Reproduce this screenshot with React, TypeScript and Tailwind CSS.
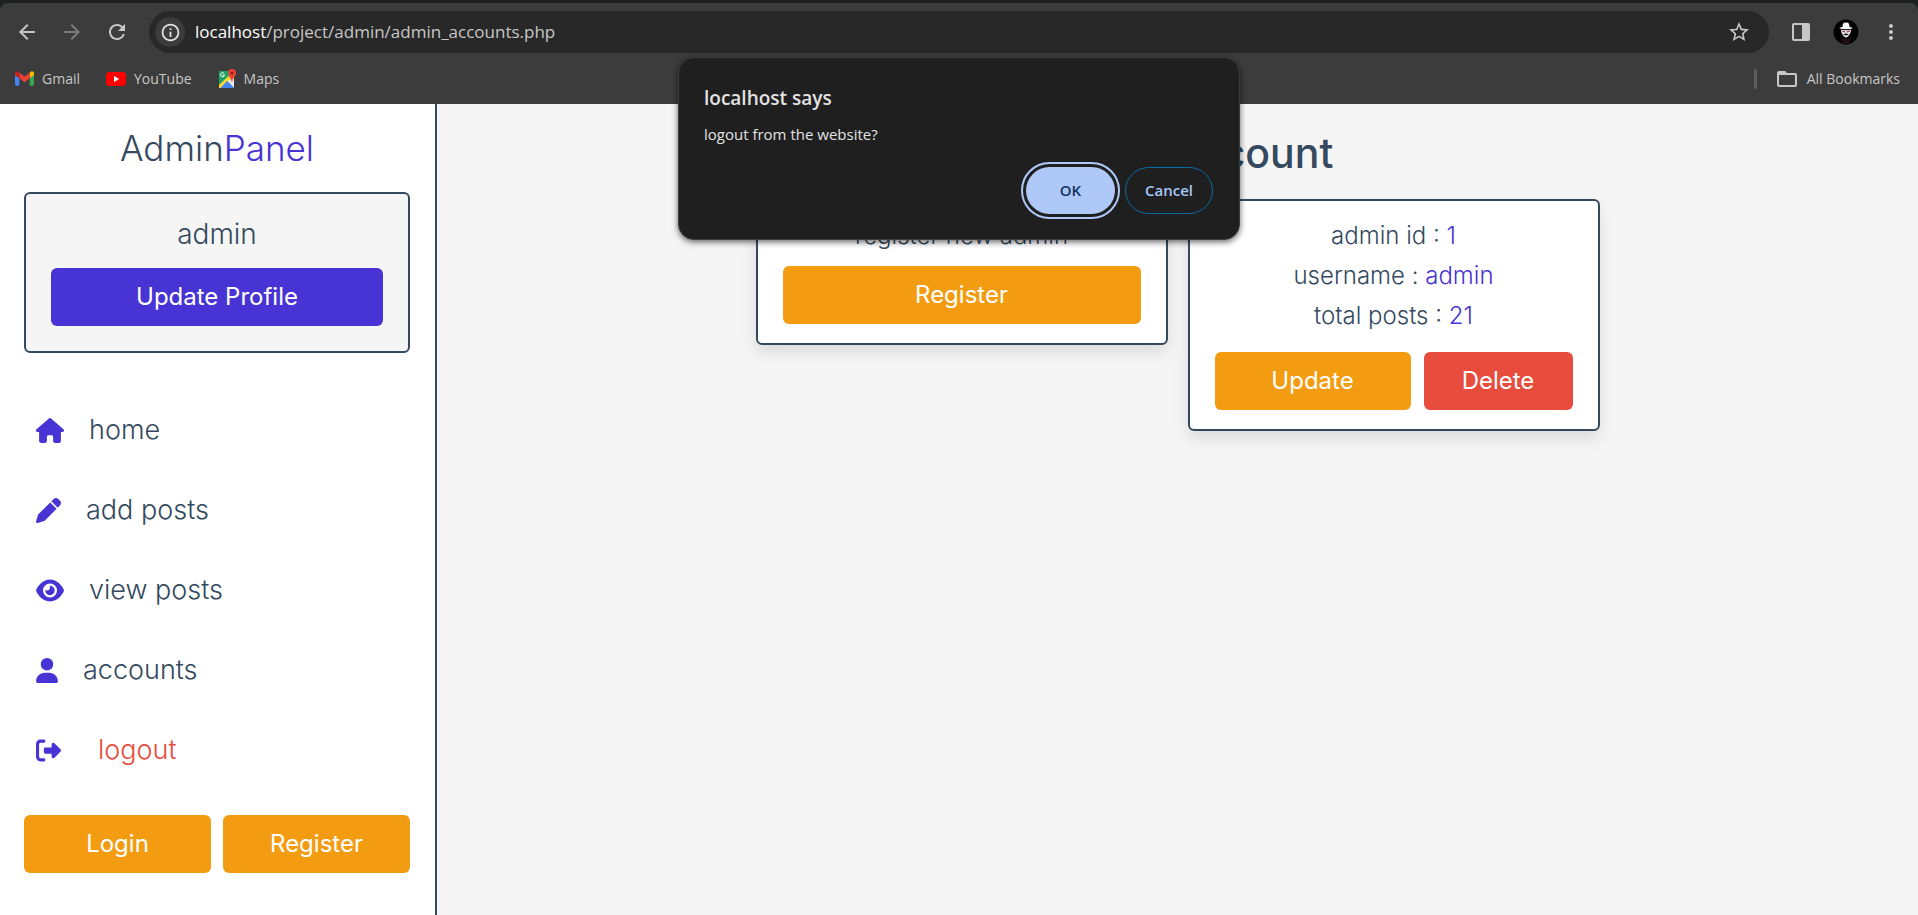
import React from "react";
import { FaHouse, FaPen, FaEye, FaUser, FaRightFromBracket } from "react-icons/fa6";
import { MdArrowBack, MdArrowForward, MdRefresh, MdOutlineInfo, MdStarBorder, MdFolderOpen, MdMoreVert } from "react-icons/md";

const solid = "flex h-[58px] items-center justify-center rounded-md font-['Inter'] text-2xl font-normal text-white";

function GmailIcon() {
  return (
    <svg viewBox="0 0 52 40" className="h-[15px] w-[19px]" aria-hidden="true">
      <path fill="#4285f4" d="M3.500 39.500h8.300V19.400L0 10.500V36a3.500 3.500 0 0 0 3.500 3.500z" />
      <path fill="#34a853" d="M40.200 39.500h8.300A3.500 3.500 0 0 0 52 36V10.500l-11.800 8.900z" />
      <path fill="#fbbc04" d="M40.200 4v15.400L52 10.500V5.800c0-4.400-5-6.900-8.500-4.300z" />
      <path fill="#ea4335" d="M11.800 19.400V4L26 14.700 40.200 4v15.400L26 30z" />
      <path fill="#c5221f" d="M0 5.800v4.700l11.800 8.900V4L8.500 1.500C5-1.100 0 1.400 0 5.800z" />
    </svg>
  );
}

function YouTubeIcon() {
  return (
    <svg viewBox="0 0 20 14" className="h-[14px] w-5" aria-hidden="true">
      <rect width="20" height="14" rx="3.500" fill="#f00" />
      <path d="M8 4l5.200 3L8 10z" fill="#fff" />
    </svg>
  );
}

function MapsIcon() {
  return (
    <svg viewBox="0 0 18 20" className="h-5 w-[18px]" aria-hidden="true">
      <path d="M1 2h15v17H1z" fill="#1fa463" />
      <path d="M16 8v11L9 12z" fill="#e8eaed" />
      <path d="M1 16L10.500 7l2.500 2.500L3.500 19H1z" fill="#fdd835" />
      <path d="M2.500 19L9 12l7 7z" fill="#4285f4" />
      <path d="M6.200 4.600A2 2 0 1 0 6.500 6.200H4.700" fill="none" stroke="#fff" strokeWidth="1" />
      <path d="M14 0A4 4 0 0 0 10 4c0 3 3.300 4.500 4 10 .7-5.500 4-7 4-10a4 4 0 0 0-4-4z" fill="#ea4335" />
      <circle cx="14" cy="4" r="1.500" fill="#8c1f17" />
    </svg>
  );
}

function Avatar() {
  return (
    <svg viewBox="0 0 26 26" className="size-[26px]" aria-hidden="true">
      <circle cx="13" cy="13" r="12.500" fill="#000" />
      <path d="M9.500 8c0-2.800 1-4.500 2.300-4.500.6 0 .8.300 1.200.300s.6-.3 1.200-.3c1.300 0 2.300 1.700 2.300 4.500 1.800.2 3 .6 3 1 0 .7-2.700 1.200-6.500 1.200S6.500 9.700 6.500 9c0-.4 1.200-.8 3-1z" fill="#fff" />
      <path d="M8 10.600c1.500.4 3 .6 5 .6s3.500-.2 5-.6c0 3.900-2 7-5 8.200-3-1.200-5-4.300-5-8.200z" fill="#e5e5e5" />
      <path d="M9.300 12l2.900 1M16.700 12l-2.900 1" stroke="#8a1c1c" fill="none" />
      <path d="M10 15.200l3-.7 3 .7-3 1.300z" fill="#111" />
      <path d="M8.500 21h9M10 23.300h6" stroke="#6b2a2a" strokeWidth=".8" />
    </svg>
  );
}

function BrowserBar() {
  return (
    <header className="bg-[#1f2120] pt-[3px] font-['Open_Sans',sans-serif] text-[#c7c7c7]">
      <div className="rounded-t-lg bg-[#3c3c3c] pt-2">
        <div className="flex h-[42px] items-center">
          <div className="flex w-[149px] items-center gap-[21px] pl-[15px]">
            <button aria-label="Back"><MdArrowBack size={24} /></button>
            <button aria-label="Forward" className="text-[#7c7c7c]"><MdArrowForward size={24} /></button>
            <button aria-label="Reload"><MdRefresh size={24} /></button>
          </div>
          <div className="flex h-full flex-1 items-center rounded-full bg-[#282828] pr-[18px] pl-[6px]">
            <span className="flex size-[30px] items-center justify-center rounded-full bg-[#3c3c3c] text-[#e3e3e3]">
              <MdOutlineInfo size={21} />
            </span>
            <p className="flex-1 pl-[10px] text-[17px]">
              <span className="text-white">localhost</span>/project/admin/admin_accounts.php
            </p>
            <button aria-label="Bookmark this tab"><MdStarBorder size={24} /></button>
          </div>
          <div className="flex w-[149px] items-center justify-between pr-[15px] pl-[20px]">
            <button aria-label="Side panel">
              <svg viewBox="0 0 24 24" className="size-6" aria-hidden="true">
                <path fillRule="evenodd" fill="currentColor" d="M5 3h14a2 2 0 0 1 2 2v14a2 2 0 0 1-2 2H5a2 2 0 0 1-2-2V5a2 2 0 0 1 2-2zm0 2v14h8V5z" />
              </svg>
            </button>
            <Avatar />
            <button aria-label="Menu"><MdMoreVert size={24} /></button>
          </div>
        </div>
        <nav className="flex h-[51px] items-center pr-[18px] pl-[15px] text-sm">
          <a href="#gmail" className="flex items-center gap-2"><GmailIcon />Gmail</a>
          <a href="#youtube" className="ml-[26px] flex items-center gap-2"><YouTubeIcon />YouTube</a>
          <a href="#maps" className="ml-[26px] flex items-center gap-2"><MapsIcon />Maps</a>
          <span className="ml-auto h-5 w-[3px] rounded bg-[#5e5e5e]" />
          <button className="ml-[18px] flex items-center gap-2"><MdFolderOpen size={24} />All Bookmarks</button>
        </nav>
      </div>
    </header>
  );
}

const links = [
  { label: "home", Icon: FaHouse, icon: "h-[25px] w-[28px]", text: "text-[#34495e]" },
  { label: "add posts", Icon: FaPen, icon: "size-[25px]", text: "text-[#34495e]" },
  { label: "view posts", Icon: FaEye, icon: "h-[25px] w-[28px]", text: "text-[#34495e]" },
  { label: "accounts", Icon: FaUser, icon: "h-[25px] w-[22px]", text: "text-[#34495e]" },
  { label: "logout", Icon: FaRightFromBracket, icon: "size-[25px]", text: "pl-3 text-[#e74c3c]" },
];

function Sidebar() {
  return (
    <aside className="w-[437px] shrink-0 border-r-2 border-[#34495e] bg-white pt-6 pr-[25px] pl-6">
      <a href="#dashboard" className="block text-center text-[35px] leading-10">
        Admin<span className="text-[#4834d4]">Panel</span>
      </a>
      <div className="mt-6 rounded-md border-2 border-[#34495e] bg-[#f5f5f5] p-[25px] pt-5">
        <p className="text-center text-[28px] leading-10">admin</p>
        <a href="#profile" className={`${solid} mt-[14px] bg-[#4834d4]`}>Update Profile</a>
      </div>
      <nav className="mt-[37px]">
        {links.map(({ label, Icon, icon, text }) => (
          <a key={label} href={`#${label}`} className="flex h-20 items-center gap-[25px] pl-3 text-[27px]">
            <Icon className={`${icon} text-[#4834d4]`} />
            <span className={text}>{label}</span>
          </a>
        ))}
      </nav>
      <div className="mt-[25px] grid grid-cols-2 gap-3">
        <a href="#login" className={`${solid} bg-[#f39c12]`}>Login</a>
        <a href="#register" className={`${solid} bg-[#f39c12]`}>Register</a>
      </div>
    </aside>
  );
}

const card = "w-[412px] rounded-md border-2 border-[#34495e] bg-white px-[25px] pt-[15px] pb-[19px] text-center text-2xl leading-10 shadow-[0_8px_16px_rgba(0,0,0,0.1)]";

function Accounts() {
  return (
    <main className="flex-1 px-5 pt-6">
      <h1 className="text-center text-[41px] leading-[50px] font-medium">admins account</h1>
      <div className="mt-[21px] flex items-start justify-center gap-5">
        <section className={card}>
          <p>register new admin</p>
          <a href="#register-admin" className={`${solid} mt-[10px] bg-[#f39c12]`}>Register</a>
        </section>
        <section className={card}>
          <p>admin id : <span className="text-[#4834d4]">1</span></p>
          <p>username : <span className="text-[#4834d4]">admin</span></p>
          <p>total posts : <span className="text-[#4834d4]">21</span></p>
          <div className="mt-4 flex gap-[13px]">
            <a href="#update" className={`${solid} flex-1 bg-[#f39c12]`}>Update</a>
            <button className={`${solid} w-[149px] bg-[#e74c3c]`}>Delete</button>
          </div>
        </section>
      </div>
    </main>
  );
}

function LogoutDialog() {
  return (
    <div
      role="alertdialog"
      aria-labelledby="dialog-title"
      className="absolute top-[57px] left-1/2 w-[562px] -translate-x-1/2 rounded-2xl border border-[#3c3c3c] bg-[#1f1f1f] px-[25px] pt-6 pb-[25px] font-['Open_Sans',sans-serif] text-[#e3e3e3] shadow-[0_2px_6px_rgba(0,0,0,0.6)]"
    >
      <h2 id="dialog-title" className="text-[19px] leading-8 font-semibold">localhost says</h2>
      <p className="mt-2 text-[15px] leading-6">logout from the website?</p>
      <div className="mt-[21px] flex justify-end gap-[10px] pr-px text-[15px] font-semibold">
        <button className="h-[47px] w-[89px] rounded-full bg-[#aec9f7] text-[#123163] outline-2 outline-offset-3 outline-[#aec9f7]">OK</button>
        <button className="h-[47px] w-[88px] rounded-full border border-[#0b6ba5] text-[#a8c7fa]">Cancel</button>
      </div>
    </div>
  );
}

export default function App() {
  return (
    <div className="relative flex min-h-screen flex-col">
      <BrowserBar />
      <div className="flex flex-1 bg-[#f5f5f5] font-['Inter',sans-serif] font-light text-[#34495e]">
        <Sidebar />
        <Accounts />
      </div>
      <LogoutDialog />
    </div>
  );
}
